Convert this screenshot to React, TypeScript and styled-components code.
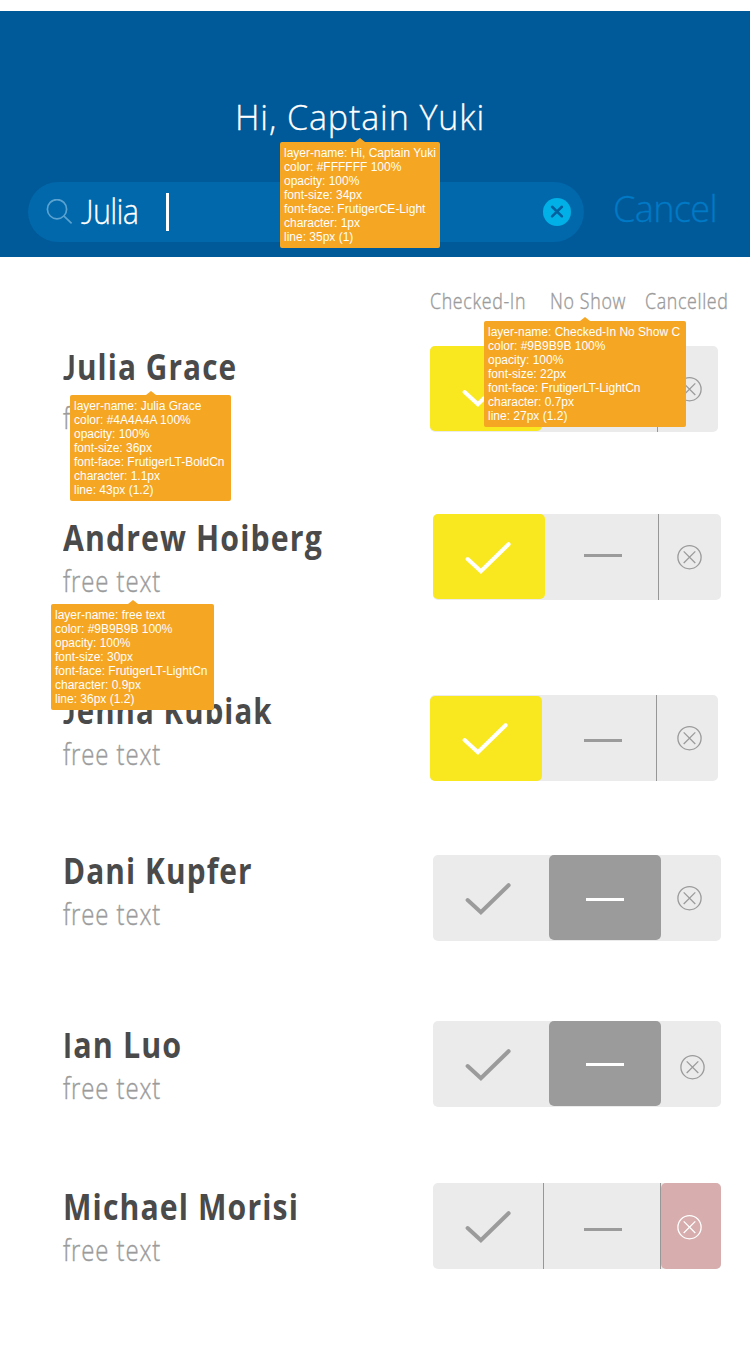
import React from 'react';
import styled, { createGlobalStyle, css } from 'styled-components';

const GlobalStyle = createGlobalStyle`
  * { box-sizing: border-box; }
  body {
    margin: 0;
    background: #fff;
    font-family: "Open Sans", "Noto Sans", sans-serif;
  }
`;

const Page = styled.div`
  position: relative;
  width: 750px;
  height: 1346px;
  padding-top: 11px;
  overflow: hidden;
`;

const Header = styled.header`
  display: flex;
  flex-direction: column;
  height: 246px;
  padding: 89px 0 15px;
  background: #005998;
`;

const Greeting = styled.h1`
  margin: 0 0 47px;
  padding-left: 235px;
  font-size: 34px;
  font-weight: 300;
  line-height: 35px;
  letter-spacing: 0.9px;
  color: #fff;
  -webkit-text-stroke: 0.3px;
  white-space: nowrap;
`;

const SearchRow = styled.div`
  display: flex;
  align-items: center;
  padding-left: 28px;
`;

const SearchField = styled.div`
  display: flex;
  align-items: center;
  width: 556px;
  height: 60px;
  padding: 0 13px 0 18px;
  border-radius: 30px;
  background: #0068ab;
`;

const Query = styled.span`
  display: block;
  width: 85px;
  margin-left: 8px;
  padding-bottom: 3px;
  font-size: 34px;
  font-weight: 300;
  line-height: 46px;
  letter-spacing: -0.8px;
  color: #fff;
  -webkit-text-stroke: 0.3px;
  transform: scaleX(0.9);
  transform-origin: left;

  &::first-letter {
    font-family: Lato, sans-serif;
  }
`;

const Caret = styled.span`
  width: 3px;
  height: 38px;
  background: #fff;
`;

const ClearButton = styled.button`
  display: flex;
  width: 28px;
  height: 28px;
  margin-left: auto;
  padding: 0;
  border: 0;
  border-radius: 50%;
  background: #00b0e6;
`;

const CancelButton = styled.button`
  margin-left: 29px;
  padding: 0 0 7px;
  border: 0;
  background: none;
  font: 300 36px/48px "Open Sans", sans-serif;
  letter-spacing: -0.6px;
  color: #007ac6;
  -webkit-text-stroke: 0.3px;
`;

const ColumnLabels = styled.div`
  display: grid;
  grid-template-columns: 120px 95px auto;
  height: 89px;
  padding: 30px 0 0 430px;
`;

const ColumnLabel = styled.span`
  font-size: 22px;
  font-weight: 300;
  line-height: 27px;
  letter-spacing: 0.8px;
  color: #9b9b9b;
  -webkit-text-stroke: 0.4px;
  white-space: nowrap;
  transform: scaleX(0.81);
  transform-origin: left;
`;

const GuestRow = styled.section<{ $height: number }>`
  display: flex;
  align-items: flex-start;
  height: ${(p) => p.$height}px;
  padding-left: 63px;
`;

const Guest = styled.div<{ $offset: number; $shift: number }>`
  flex: none;
  width: ${(p) => 367 + p.$shift}px;
  margin-top: ${(p) => p.$offset}px;
  white-space: nowrap;
`;

const Name = styled.h2<{ $sansInitial: boolean; $stretch: number }>`
  margin: 0;
  font-size: 35px;
  font-weight: 700;
  line-height: 43px;
  letter-spacing: 1.3px;
  color: #4a4a4a;
  transform: scaleX(${(p) => p.$stretch});
  transform-origin: left;

  &::first-letter {
    ${(p) => p.$sansInitial && css`font-family: Lato, sans-serif;`}
  }
`;

const Note = styled.p<{ $gap: number }>`
  margin: ${(p) => p.$gap}px 0 0;
  font-size: 30px;
  font-weight: 300;
  line-height: 36px;
  letter-spacing: 1.1px;
  color: #9b9b9b;
  -webkit-text-stroke: 0.4px;
  transform: scaleX(0.8);
  transform-origin: left;
`;

const StatusControl = styled.div<{ $columns: string }>`
  display: grid;
  grid-template-columns: ${(p) => p.$columns};
  flex: none;
  width: 288px;
  height: 86px;
  border-radius: 5px;
  background: #ebebeb;
`;

const tones = {
  none: css``,
  checked: css`background: #f9e81f; color: #fff;`,
  noShow: css`background: #9b9b9b; color: #fff;`,
  cancelled: css`background: #d7adad; color: #fff;`,
};

const Segment = styled.button<{ $tone?: keyof typeof tones; $low?: boolean; $divided?: boolean; $full?: boolean; $x: number; $y: number }>`
  display: flex;
  align-items: flex-start;
  height: ${(p) => (p.$tone && !p.$full ? 85 : 86)}px;
  margin: ${(p) => (p.$low ? 1 : 0)}px 0 0;
  padding: ${(p) => p.$y}px 0 0 ${(p) => p.$x}px;
  border: 0;
  border-right: ${(p) => (p.$divided ? '1px solid #979797' : '0')};
  border-radius: ${(p) => (p.$tone ? 5 : 0)}px;
  background: transparent;
  color: #9b9b9b;
  ${(p) => tones[p.$tone ?? 'none']}

  & > * { flex: none; }
`;

const Dash = styled.span`
  width: 37.6px;
  height: 3px;
  background: currentColor;
`;

const Tooltip = styled.aside<{ $left: number; $top: number; $width: number }>`
  position: absolute;
  left: ${(p) => p.$left}px;
  top: ${(p) => p.$top}px;
  width: ${(p) => p.$width}px;
  height: 106px;
  padding: 4px;
  border-radius: 2px;
  background: #f5a623;
  font: 12px/14px "Liberation Sans", Arial, sans-serif;
  color: #fff;
  white-space: nowrap;

  &::before {
    content: '';
    position: absolute;
    left: 50%;
    top: -4px;
    margin-left: -5px;
    border: solid transparent;
    border-width: 0 5px 4px;
    border-bottom-color: #f5a623;
  }
`;

const CheckIcon = () => (
  <svg width="46" height="34" viewBox="0 0 46 34" fill="none" stroke="currentColor" strokeWidth="4" strokeLinecap="round" strokeLinejoin="miter">
    <path d="M2.6 18 L15.9 30.2 L43.6 3.2" />
  </svg>
);

const CircleXIcon = () => (
  <svg width="25" height="26" viewBox="0 0 25 26" fill="none" stroke="currentColor" strokeWidth="1.3">
    <circle cx="12.5" cy="13.2" r="11.6" />
    <path d="M6.7 7.4 L18.3 19 M18.3 7.4 L6.7 19" />
  </svg>
);

const SearchIcon = () => (
  <svg width="27" height="27" viewBox="0 0 27 27" fill="none" stroke="#5aa3d0" strokeWidth="1.7">
    <circle cx="11" cy="10.2" r="9.6" />
    <path d="M18 17.1 L25.6 24.3" />
  </svg>
);

const ClearIcon = () => (
  <svg width="28" height="28" viewBox="0 0 28 28" fill="none" stroke="#00609f" strokeWidth="2.6" strokeLinecap="round">
    <path d="M9.1 8.8 L18.9 18.4 M18.9 8.8 L9.1 18.4" />
  </svg>
);

type Status = 'checked' | 'noShow' | 'cancelled';
type Point = [number, number];

interface GuestEntry {
  name: string;
  stretch: number;
  status: Status;
  height: number;
  offset: number;
  gap?: number;
  shift: number;
  columns: string;
  low?: boolean;
  check: Point;
  dash: Point;
  cross: Point;
}

const guests: GuestEntry[] = [
  { name: 'Julia Grace', stretch: 0.85, status: 'checked', height: 168, offset: -1, gap: 12, shift: 0, columns: '112px 116px 60px', check: [32, 28], dash: [42, 42], cross: [19, 30] },
  { name: 'Andrew Hoiberg', stretch: 0.864, status: 'checked', height: 181, offset: 2, shift: 3, columns: '112px 114px 62px', check: [32, 27], dash: [39, 40], cross: [18, 30] },
  { name: 'Jenna Kubiak', stretch: 0.84, status: 'checked', height: 160, offset: -6, shift: 0, columns: '112px 115px 61px', low: true, check: [32, 26], dash: [42, 44], cross: [20, 30] },
  { name: 'Dani Kupfer', stretch: 0.852, status: 'noShow', height: 166, offset: -6, shift: 3, columns: '116px 112px 60px', check: [32, 27], dash: [37, 43], cross: [16, 30] },
  { name: 'Ian Luo', stretch: 0.87, status: 'noShow', height: 162, offset: 2, shift: 3, columns: '116px 112px 60px', check: [32, 27], dash: [37, 42], cross: [19, 33] },
  { name: 'Michael Morisi', stretch: 0.862, status: 'cancelled', height: 163, offset: 2, shift: 3, columns: '111px 117px 60px', check: [32, 27], dash: [40, 45], cross: [16, 31] },
];

const annotations = [
  { left: 280, top: 142, width: 160, lines: ['layer-name: Hi, Captain Yuki', 'color: #FFFFFF 100%', 'opacity: 100%', 'font-size: 34px', 'font-face: FrutigerCE-Light', 'character: 1px', 'line: 35px (1)'] },
  { left: 484, top: 321, width: 202, lines: ['layer-name: Checked-In No Show C', 'color: #9B9B9B 100%', 'opacity: 100%', 'font-size: 22px', 'font-face: FrutigerLT-LightCn', 'character: 0.7px', 'line: 27px (1.2)'] },
  { left: 70, top: 395, width: 161, lines: ['layer-name: Julia Grace', 'color: #4A4A4A 100%', 'opacity: 100%', 'font-size: 36px', 'font-face: FrutigerLT-BoldCn', 'character: 1.1px', 'line: 43px (1.2)'] },
  { left: 51, top: 604, width: 163, lines: ['layer-name: free text', 'color: #9B9B9B 100%', 'opacity: 100%', 'font-size: 30px', 'font-face: FrutigerLT-LightCn', 'character: 0.9px', 'line: 36px (1.2)'] },
];

export default function App() {
  return (
    <Page>
      <GlobalStyle />
      <Header>
        <Greeting>Hi, Captain Yuki</Greeting>
        <SearchRow>
          <SearchField>
            <SearchIcon />
            <Query>Julia</Query>
            <Caret />
            <ClearButton aria-label="Clear"><ClearIcon /></ClearButton>
          </SearchField>
          <CancelButton>Cancel</CancelButton>
        </SearchRow>
      </Header>
      <ColumnLabels>
        <ColumnLabel>Checked-In</ColumnLabel>
        <ColumnLabel>No Show</ColumnLabel>
        <ColumnLabel>Cancelled</ColumnLabel>
      </ColumnLabels>
      {guests.map((g) => (
        <GuestRow key={g.name} $height={g.height}>
          <Guest $offset={g.offset} $shift={g.shift}>
            <Name $sansInitial={/^[IJ]/.test(g.name)} $stretch={g.stretch}>{g.name}</Name>
            <Note $gap={g.gap ?? 4}>free text</Note>
          </Guest>
          <StatusControl $columns={g.columns}>
            <Segment aria-label="Checked-In" $tone={g.status === 'checked' ? 'checked' : undefined} $low={g.low} $divided={g.status === 'cancelled'} $x={g.check[0]} $y={g.check[1]}>
              <CheckIcon />
            </Segment>
            <Segment aria-label="No Show" $tone={g.status === 'noShow' ? 'noShow' : undefined} $divided={g.status !== 'noShow'} $x={g.dash[0]} $y={g.dash[1]}>
              <Dash />
            </Segment>
            <Segment aria-label="Cancelled" $tone={g.status === 'cancelled' ? 'cancelled' : undefined} $full $x={g.cross[0]} $y={g.cross[1]}>
              <CircleXIcon />
            </Segment>
          </StatusControl>
        </GuestRow>
      ))}
      {annotations.map((a) => (
        <Tooltip key={a.lines[0]} $left={a.left} $top={a.top} $width={a.width}>
          {a.lines.map((line) => <div key={line}>{line}</div>)}
        </Tooltip>
      ))}
    </Page>
  );
}
